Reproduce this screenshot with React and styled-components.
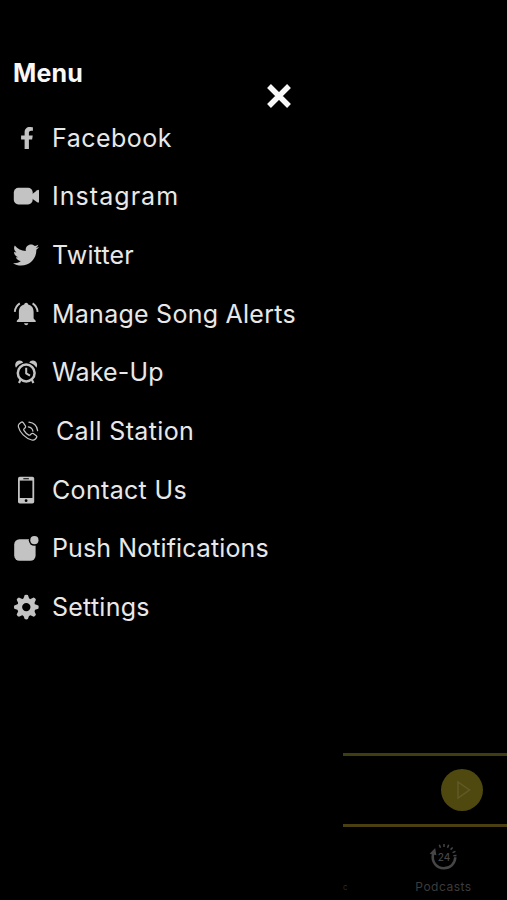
import styled, { createGlobalStyle } from "styled-components"
import { FaFacebookF, FaTwitter } from "react-icons/fa"

const teeth = [0, 45, 90, 135, 180, 225, 270, 315]
const ticks = [-22, 0, 22, 44, 66, 86]

function VideoIcon() {
    return (
        <svg width="26" height="26" viewBox="0 0 26 26" fill="currentColor">
            <rect x="0.8" y="4.8" width="18.9" height="16.6" rx="4.6" />
            <path d="M19 11.2 L24.2 7.2 Q26 6.2 26 8 V18.6 Q26 20.4 24.2 19.2 L19 15.4 Z" />
        </svg>
    )
}

function BellIcon() {
    return (
        <svg width="26" height="26" viewBox="0 0 26 26" fill="currentColor">
            <path d="M13.2 1.7 C14.4 1.7 15.1 2.5 15.2 3.6 C18.7 4.4 20.6 7.2 20.6 11 V17.4 L22.7 19.7 V21 H3.8 V19.7 L5.9 17.4 V11 C5.9 7.2 7.8 4.4 11.2 3.6 C11.3 2.5 12 1.7 13.2 1.7 Z" />
            <path d="M11 22.2 H15.4 Q14.9 24.2 13.2 24.2 Q11.5 24.2 11 22.2 Z" />
            <path d="M6.8 2.4 C3.6 4.4 2.2 7 1.8 10.8 M19.6 2.4 C22.8 4.4 24.2 7 24.6 10.8" fill="none" stroke="currentColor" strokeWidth="1.9" />
        </svg>
    )
}

function AlarmIcon() {
    return (
        <svg width="26" height="26" viewBox="0 0 26 26" fill="none" stroke="currentColor">
            <path d="M3 8.8 C1.2 5.2 2.8 1.6 6.4 1.4 C8 1.3 9.5 2 10.2 3.5 Q5.2 5 3 8.8 Z M23.4 8.8 C25.2 5.2 23.6 1.6 20 1.4 C18.4 1.3 16.9 2 16.2 3.5 Q21.2 5 23.4 8.8 Z" fill="currentColor" stroke="none" />
            <circle cx="13.2" cy="14" r="8.4" strokeWidth="2.5" />
            <path d="M13.2 8.8 V14.4 L17 16.6" strokeWidth="2" />
            <path d="M7.6 20.6 L6 24 M18.8 20.6 L20.4 24" strokeWidth="2.2" />
        </svg>
    )
}

function CallIcon() {
    return (
        <svg width="26" height="26" viewBox="0 0 26 26" fill="none" stroke="currentColor" strokeWidth="1.25" strokeLinecap="round" strokeLinejoin="round">
            <path d="M4.3 5.7 L6.2 4.2 Q7.3 3.6 8.2 4.7 L10.4 7.8 Q11 8.9 10.2 9.7 L9 10.9 Q8.4 11.6 8.9 12.4 Q10.8 15.6 13.8 17.1 Q14.6 17.4 15.2 16.9 L16.4 15.7 Q17.3 14.9 18.3 15.6 L21.3 17.7 Q22.3 18.5 21.6 19.5 L20.1 21.3 Q18.8 22.6 16.8 22 C10.3 20.2 4.7 14.4 3.4 8.8 Q3 6.9 4.3 5.7 Z" />
            <path d="M13.3 8.9 Q17.2 9.5 17.9 13.2 M14 4.2 Q21.6 5.1 22.6 12.6" />
        </svg>
    )
}

function MobileIcon() {
    return (
        <svg width="26" height="28" viewBox="0 0 26 28">
            <rect x="5" y="0.8" width="16.2" height="26.8" rx="1.8" fill="currentColor" />
            <rect x="6.8" y="4.6" width="12.6" height="17.4" fill="#000000" />
            <rect x="10.2" y="2.2" width="5.8" height="1" rx="0.5" fill="#000000" />
            <circle cx="13.1" cy="24.7" r="1.4" fill="#000000" />
        </svg>
    )
}

function BadgeIcon() {
    return (
        <svg width="26" height="26" viewBox="0 0 26 26" fill="currentColor">
            <rect x="1.2" y="4.2" width="21.4" height="21.6" rx="5.2" />
            <circle cx="21.4" cy="5.2" r="5.6" fill="#000000" />
            <circle cx="21.4" cy="5.2" r="4.1" />
        </svg>
    )
}

function GearIcon() {
    return (
        <svg width="26" height="26" viewBox="0 0 26 26">
            {teeth.map(angle => (
                <path key={angle} d="M10.3 5 L11.7 1.1 Q13.3 0.3 14.9 1.1 L16.3 5 Z" fill="currentColor" transform={`rotate(${angle} 13.3 13.1)`} />
            ))}
            <circle cx="13.3" cy="13.1" r="6.7" fill="none" stroke="currentColor" strokeWidth="5" />
        </svg>
    )
}

function PodcastIcon() {
    return (
        <svg width="30" height="28" viewBox="0 0 30 28" fill="none" stroke="currentColor">
            <path d="M4.1 10.5 C2.3 19 7.4 25.3 14.7 25.3 C21.6 25.3 26 20.4 26.3 14.3" strokeWidth="2.5" />
            <path d="M0.6 10.8 L6.2 5 L7.4 12.2 Z" fill="currentColor" stroke="none" />
            {ticks.map(angle => (
                <path key={angle} d="M15 0.9 V4" strokeWidth="1.5" transform={`rotate(${angle} 15 13.4)`} />
            ))}
            <IconNumber x="15" y="17.6" textAnchor="middle">24</IconNumber>
        </svg>
    )
}

const items = [
    { label: "Facebook", icon: <FaFacebookF size={22} />, spacing: 0.5 },
    { label: "Instagram", icon: <VideoIcon />, spacing: 1.05 },
    { label: "Twitter", icon: <FaTwitter size={26} />, spacing: 0.2 },
    { label: "Manage Song Alerts", icon: <BellIcon />, spacing: 0.25 },
    { label: "Wake-Up", icon: <AlarmIcon />, spacing: 0.15 },
    { label: "Call Station", icon: <CallIcon />, spacing: 0.36, indent: 4 },
    { label: "Contact Us", icon: <MobileIcon />, spacing: 0.33 },
    { label: "Push Notifications", icon: <BadgeIcon />, spacing: 0.1 },
    { label: "Settings", icon: <GearIcon />, spacing: 0.25 },
]

export default function App() {
    return (
        <Screen>
            <GlobalStyle />
            <Drawer>
                <Topo>
                    <Title>Menu</Title>
                    <CloseButton aria-label="Close">
                        <svg width="26" height="26" viewBox="0 0 26 26" stroke="#f8f8f8" strokeWidth="5.4">
                            <path d="M3 3 L23 23 M23 3 L3 23" />
                        </svg>
                    </CloseButton>
                </Topo>
                <List>
                    {items.map(item => (
                        <Item key={item.label} $indent={item.indent}>
                            <IconBox>{item.icon}</IconBox>
                            <Label $spacing={item.spacing}>{item.label}</Label>
                        </Item>
                    ))}
                </List>
            </Drawer>
            <Behind>
                <Player>
                    <PlayButton aria-label="Play">
                        <svg width="16" height="20" viewBox="0 0 16 20" fill="none" stroke="#625a26" strokeWidth="1.5">
                            <path d="M2 2 L13.5 10 L2 18 Z" />
                        </svg>
                    </PlayButton>
                </Player>
                <Tabs>
                    <EdgeTab>c</EdgeTab>
                    <Tab>
                        <PodcastIcon />
                        <TabLabel>Podcasts</TabLabel>
                    </Tab>
                </Tabs>
            </Behind>
        </Screen>
    )
}

const GlobalStyle = createGlobalStyle`
    * {
        box-sizing: border-box;
    }

    body {
        margin: 0;
        background-color: #000000;
        font-family: "Inter", "Liberation Sans", sans-serif;
    }
`

const Screen = styled.div`
    width: 507px;
    height: 900px;
    display: flex;
    overflow: hidden;
    background-color: #000000;
`

const Drawer = styled.nav`
    width: 343px;
    height: 100%;
    padding: 58px 0 0 13px;
`

const Topo = styled.div`
    height: 50.5px;
    display: flex;
    justify-content: space-between;
    padding-right: 51px;
`

const Title = styled.h1`
    margin: 0;
    font-size: 25px;
    font-weight: 700;
    line-height: 30px;
    letter-spacing: 0.2px;
    color: #f8f8f8;
`

const CloseButton = styled.button`
    width: 26px;
    height: 26px;
    margin-top: 25px;
    padding: 0;
    border: none;
    background: none;

    svg {
        display: block;
    }
`

const List = styled.ul`
    margin: 0;
    padding: 0;
    list-style: none;
`

const Item = styled.li`
    height: 58.67px;
    display: flex;
    align-items: center;
    gap: ${props => (props.$indent ? 11 + props.$indent - 2 : 11)}px;
    padding-left: ${props => (props.$indent ? 2 : 0)}px;
`

const IconBox = styled.span`
    width: 27px;
    display: flex;
    justify-content: flex-start;
    flex-shrink: 0;
    color: #c3c3c3;

    svg[viewBox="0 0 320 512"] {
        margin-left: 3px;
    }
`

const Label = styled.span`
    padding-left: 1px;
    font-size: 25px;
    font-weight: 400;
    line-height: 30px;
    letter-spacing: ${props => props.$spacing}px;
    white-space: nowrap;
    color: #e8e8e8;
`

const Behind = styled.div`
    flex: 1;
    display: flex;
    flex-direction: column;
    justify-content: flex-end;
`

const Player = styled.div`
    height: 74px;
    display: flex;
    align-items: center;
    justify-content: flex-end;
    padding-right: 24px;
    border-top: 3px solid #3f3e12;
    border-bottom: 3px solid #4a3f10;
`

const PlayButton = styled.button`
    width: 42px;
    height: 42px;
    display: flex;
    align-items: center;
    justify-content: center;
    padding: 0 0 0 4px;
    border: none;
    border-radius: 50%;
    background-color: #50490f;
`

const Tabs = styled.div`
    height: 73px;
    display: flex;
    justify-content: space-between;
    color: #464646;
`

const EdgeTab = styled.div`
    height: 16px;
    margin-top: 52px;
    font-size: 8px;
    line-height: 16px;
    color: #2a2a2a;
`

const Tab = styled.div`
    width: 127px;
    display: flex;
    flex-direction: column;
    align-items: center;
    padding-top: 16px;
`

const TabLabel = styled.span`
    margin-top: 8px;
    font-size: 12px;
    line-height: 16px;
    letter-spacing: 0.5px;
    color: #3c3c3c;
`

const IconNumber = styled.text`
    font-size: 10px;
    font-weight: 500;
    fill: currentColor;
    stroke: none;
`
